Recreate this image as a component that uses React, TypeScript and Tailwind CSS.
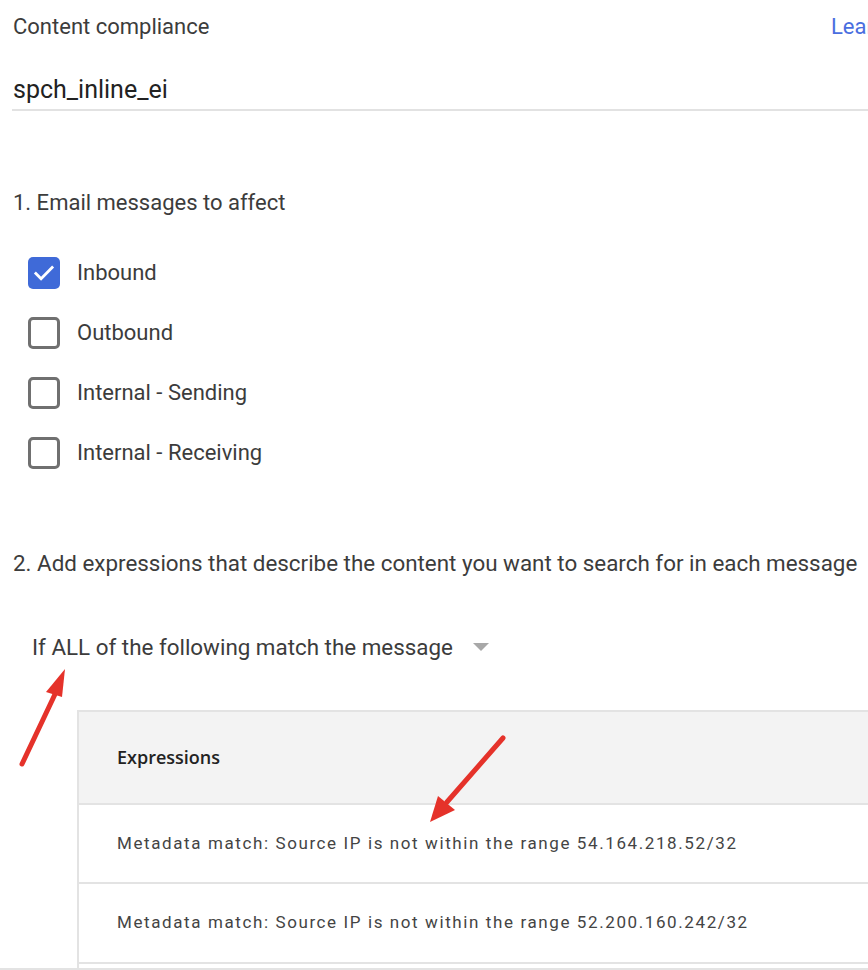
import React from "react";

function Checkbox({ checked, label }: { checked?: boolean; label: string }) {
  return (
    <div className="flex h-[60px] items-center gap-[17px]">
      {checked ? (
        <div className="flex h-[32px] w-[32px] items-center justify-center rounded-[5px] bg-[#3f6ad8]">
          <svg viewBox="0 0 24 24" className="h-[26px] w-[26px]" fill="none" stroke="white" strokeWidth="2.6" strokeLinecap="square">
            <path d="M4.5 12.5l4.8 4.8L19.5 7" />
          </svg>
        </div>
      ) : (
        <div className="h-[32px] w-[32px] rounded-[5px] border-[3px] border-[#707070]" />
      )}
      <span className="text-[22px] leading-[30px] text-[#3c3c3c]">{label}</span>
    </div>
  );
}

export default function App() {
  return (
    <div className="relative h-[970px] w-[868px] overflow-hidden bg-white font-['Roboto',sans-serif]">
      <div className="flex whitespace-nowrap pl-[13px] pt-[12px] text-[22px] leading-[30px]">
        <span className="w-[818px] shrink-0 text-[#3c3c3c]">Content compliance</span>
        <span className="text-[#4a6ee0]">Learn more</span>
      </div>

      <div className="ml-[12px] mt-[33px] border-b-2 border-[#e2e2e2] pb-[4px] pl-[1px] text-[25px] leading-[30px] text-[#222]">
        spch_inline_ei
      </div>

      <div className="ml-[13px] mt-[77px] text-[22px] leading-[30px] text-[#3c3c3c]">1. Email messages to affect</div>

      <div className="ml-[28px] mt-[25px] flex flex-col">
        <Checkbox checked label="Inbound" />
        <Checkbox label="Outbound" />
        <Checkbox label="Internal - Sending" />
        <Checkbox label="Internal - Receiving" />
      </div>

      <div className="ml-[13px] mt-[65px] whitespace-nowrap text-[22.4px] leading-[30px] text-[#3c3c3c]">
        2. Add expressions that describe the content you want to search for in each message
      </div>

      <div className="ml-[32px] mt-[54px] flex h-[30px] items-center gap-[20px]">
        <span className="text-[22.4px] leading-[30px] text-[#3c3c3c]">If ALL of the following match the message</span>
        <svg viewBox="0 0 16 8" className="h-[8px] w-[16px]">
          <path d="M0 0h16L8 8z" fill="#a8a8a8" />
        </svg>
      </div>

      <div className="ml-[77px] mt-[48px] w-[900px] border-l-2 border-t-2 border-[#e3e3e3]">
        <div className="flex h-[93px] items-center border-b-2 border-[#e3e3e3] bg-[#f3f3f3] pl-[38px] font-['Open_Sans',sans-serif] text-[18px] font-semibold text-[#222]">
          Expressions
        </div>
        <div className="flex h-[79px] items-center border-b-2 border-[#e3e3e3] pl-[38px] text-[17px] tracking-[1.6px] text-[#444]">
          Metadata match: Source IP is not within the range 54.164.218.52/32
        </div>
        <div className="flex h-[80px] items-center border-b-2 border-[#e3e3e3] pl-[38px] text-[17px] tracking-[1.6px] text-[#444]">
          Metadata match: Source IP is not within the range 52.200.160.242/32
        </div>
        <div className="h-[4px]" />
      </div>
      <div className="h-[2px] w-full bg-[#e3e3e3]" />

      <svg className="pointer-events-none absolute left-0 top-0" width="868" height="970">
        <g stroke="#e5322a" strokeWidth="5" strokeLinecap="round" fill="#e5322a">
          <line x1="22" y1="764" x2="57" y2="690" />
          <line x1="503" y1="738" x2="447" y2="802" />
        </g>
        <polygon points="65,669 46,692 62,697" fill="#e5322a" />
        <polygon points="430,822 438,796 455,810" fill="#e5322a" />
      </svg>
    </div>
  );
}
